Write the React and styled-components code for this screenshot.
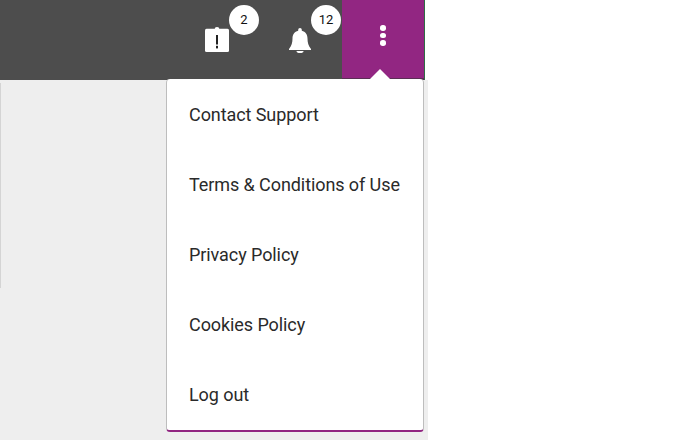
import React from "react"
import styled, { createGlobalStyle } from "styled-components"

const GlobalStyle = createGlobalStyle`
html, body {
  margin: 0;
  padding: 0;
  background: #fff;
  font-family: Roboto, "Liberation Sans", sans-serif;
}
`

const menuItems = [
  "Contact Support",
  "Terms & Conditions of Use",
  "Privacy Policy",
  "Cookies Policy",
  "Log out",
]

const ClipboardIcon = () => (
  <svg width="24" height="25" viewBox="0 0 24 25">
    <circle cx="12" cy="2.400" r="2.400" fill="#fff" />
    <rect y="1.800" width="24" height="23.200" rx="1.500" fill="#fff" />
    <rect x="11" y="8" width="2" height="9.500" fill="#222" />
    <rect x="11" y="18.800" width="2" height="2.600" fill="#222" />
  </svg>
)

const BellIcon = () => (
  <svg width="22" height="25" viewBox="0 0 22 25">
    <path
      fill="#fff"
      d="M11 0a1.800 1.800 0 0 1 1.800 1.800v.9C16.500 3.500 18.500 6.500 18.500 10.500c0 4 .8 7 3.500 10.500v1H0v-1c2.700-3.500 3.500-6.500 3.500-10.500 0-4 2-7 5.700-7.800v-.9A1.800 1.800 0 0 1 11 0z"
    />
    <path fill="#fff" d="M7.500 23h7a3.500 2 0 0 1-7 0z" />
  </svg>
)

const App = () => (
  <>
    <GlobalStyle />
    <Page>
      <Header>
        <ClipboardButton>
          <ClipboardIcon />
          <Badge>2</Badge>
        </ClipboardButton>
        <BellButton>
          <BellIcon />
          <Badge>12</Badge>
        </BellButton>
        <MoreButton>
          <Dot />
          <Dot />
          <Dot />
        </MoreButton>
        <Menu>
          {menuItems.map(item => (
            <MenuItem key={item}>{item}</MenuItem>
          ))}
        </Menu>
      </Header>
      <SideEdge />
    </Page>
  </>
)

export default App

const Page = styled.div`
width: 428px;
height: 440px;
background: linear-gradient(#fff 80px, #eee 80px);
overflow: hidden;
`

const Header = styled.header`
position: relative;
display: flex;
justify-content: flex-end;
width: 425px;
height: 80px;
box-sizing: border-box;
background: #4d4d4d;
border-right: 1px solid #2f6b45;
`

const IconButton = styled.div`
position: relative;
display: flex;
align-items: center;
justify-content: center;
width: 82px;
box-sizing: border-box;
`

const ClipboardButton = styled(IconButton)`
padding: 0 4px 2px 0;
`

const BellButton = styled(IconButton)`
padding: 0 2px 0 0;
`

const Badge = styled.span`
position: absolute;
top: 5px;
right: 1px;
width: 30px;
height: 30px;
border-radius: 50%;
background: #fff;
color: #111;
font-size: 13px;
line-height: 30px;
text-align: center;
`

const MoreButton = styled.div`
position: relative;
display: flex;
flex-direction: column;
align-items: center;
justify-content: center;
gap: 2px;
width: 82px;
padding-bottom: 7px;
box-sizing: border-box;
background: #922682;
border-bottom: 2px solid #5b2f55;
&::after {
  content: "";
  position: absolute;
  left: 28px;
  bottom: -1px;
  border-left: 10px solid transparent;
  border-right: 10px solid transparent;
  border-bottom: 10px solid #fff;
}
`

const Dot = styled.span`
width: 5.500px;
height: 5.500px;
border-radius: 50%;
background: #fff;
`

const Menu = styled.nav`
position: absolute;
top: 79px;
left: 166px;
z-index: 2;
width: 258px;
height: 353px;
padding-top: 1px;
box-sizing: border-box;
background: #fff;
border-radius: 4px;
border: 1px solid #bdbdbd;
border-top: 0;
border-bottom: 2px solid #922682;
`

const MenuItem = styled.div`
height: 70px;
padding-left: 22px;
color: #2a2a2a;
font-size: 18px;
letter-spacing: -0.08px;
line-height: 70px;
`

const SideEdge = styled.div`
width: 1px;
height: 205px;
margin-top: 3px;
background: #d4d4d4;
`
